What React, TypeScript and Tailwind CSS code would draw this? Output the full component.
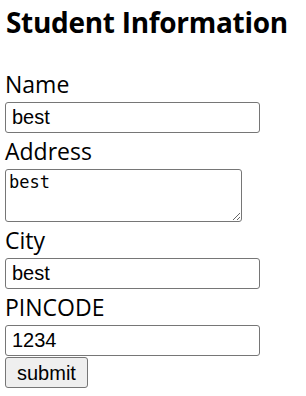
export default function App() {
  const label = "block h-[36px] pt-[3px] text-[23px] leading-[31px] text-black [font-family:'Open_Sans',sans-serif]";
  const input =
    "block h-[31px] w-[255px] rounded-[3px] border border-[#767676] bg-white px-[6px] text-[20px] text-black [font-family:'Liberation_Sans',Arial,sans-serif] outline-none";

  return (
    <div className="min-h-screen bg-white pl-[5px] pt-[2px]">
      <h2 className="whitespace-nowrap pl-[1px] text-[28px] font-bold leading-[40px] tracking-[-0.3px] text-black [font-family:'Open_Sans',sans-serif]">
        Student Information
      </h2>
      <form onSubmit={(e) => e.preventDefault()} className="mt-[24px]">
        <label className={label}>Name</label>
        <input className={input} defaultValue="best" />
        <label className={label}>Address</label>
        <textarea
          className="block h-[53px] w-[237px] rounded-[3px] border border-[#767676] bg-white px-[3px] py-[2px] text-[17px] leading-[20px] text-black [font-family:'DejaVu_Sans_Mono',monospace] outline-none"
          defaultValue="best"
        />
        <label className={label}>City</label>
        <input className={input} defaultValue="best" />
        <label className={label}>PINCODE</label>
        <input className={input} defaultValue="1234" />
        <button className="mt-[1px] block h-[31px] rounded-[3px] border border-[#767676] bg-[#efefef] px-[11px] text-[20px] text-black [font-family:'Liberation_Sans',Arial,sans-serif]">
          submit
        </button>
      </form>
    </div>
  );
}
